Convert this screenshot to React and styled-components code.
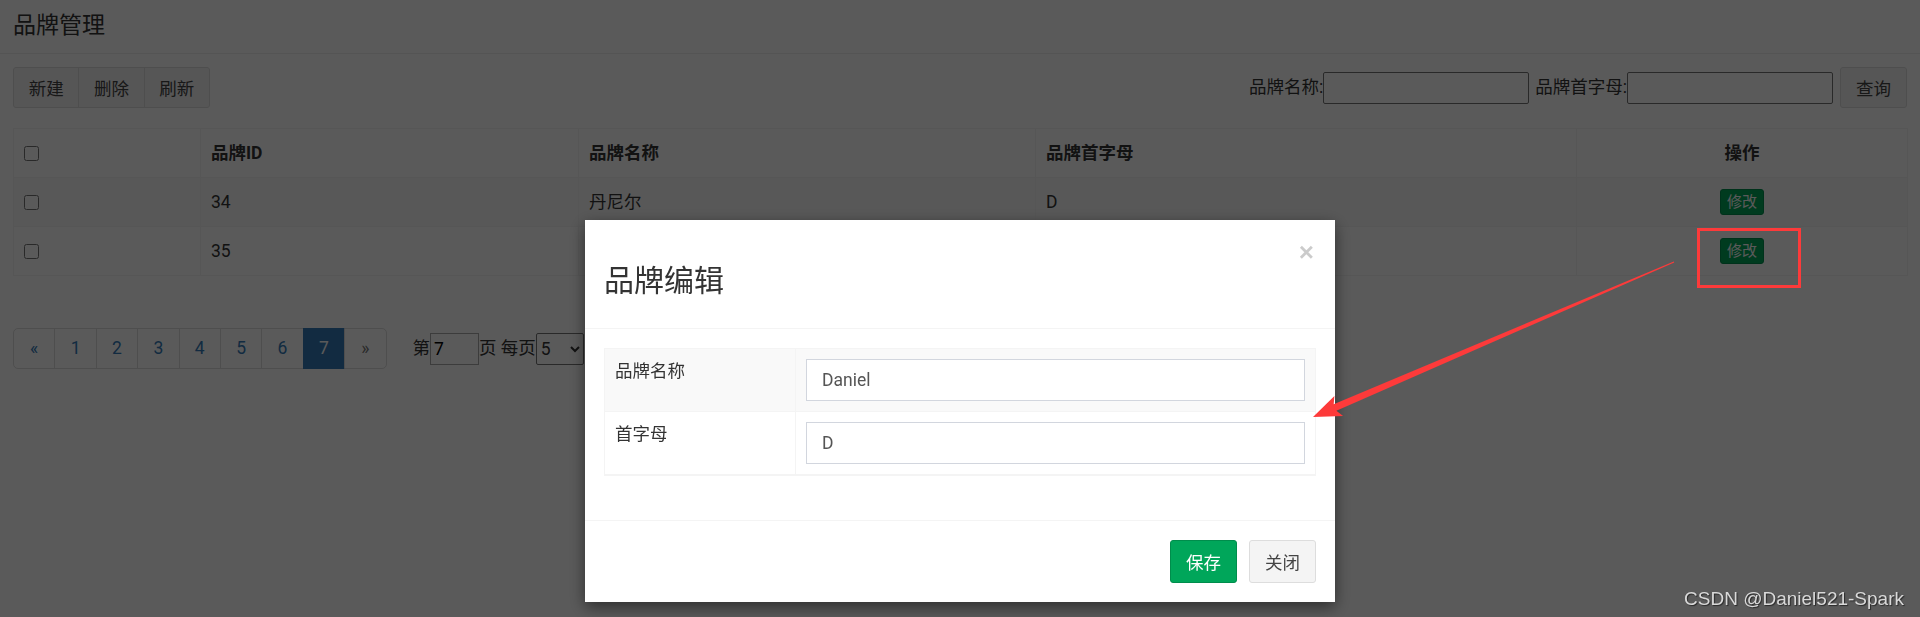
import React from 'react';
import styled, { createGlobalStyle, css } from 'styled-components';

const GlobalStyle = createGlobalStyle`
  html, body {
    margin: 0;
    padding: 0;
    background: #fff;
  }
  body {
    width: 1920px;
    height: 617px;
    overflow: hidden;
    font-family: Roboto, "Noto Sans CJK SC", sans-serif;
    font-size: 17.5px;
    line-height: 1.42857;
    color: #333;
  }
  * {
    box-sizing: border-box;
  }
`;

const Page = styled.div`
    padding: 0 13px;
`;

const PageHeader = styled.div`
    height: 54px;
    margin: 0 -13px;
    padding: 0 13px;
    display: flex;
    align-items: center;
    border-bottom: 1px solid #eee;
`;

const Title = styled.h3`
    margin: 0;
    font-size: 23px;
    font-weight: 400;
`;

const Toolbar = styled.div`
    margin-top: 13px;
    height: 41px;
    display: flex;
    justify-content: space-between;
    align-items: center;
`;

const BtnGroup = styled.div`
    display: flex;
`;

const btnBase = css`
    height: 41px;
    padding: 0;
    font-family: inherit;
    font-size: 17.5px;
    background: #f4f4f4;
    border: 1px solid #ddd;
    color: #444;
    cursor: pointer;
`;

const GroupBtn = styled.button`
    ${btnBase};
    width: 66.3px;
    border-radius: 0;
    & + & {
        margin-left: -1px;
    }
    &:first-child {
        border-radius: 3px 0 0 3px;
    }
    &:last-child {
        border-radius: 0 3px 3px 0;
    }
`;

const SearchForm = styled.form`
    display: flex;
    align-items: center;
`;

const SearchLabel = styled.label`
    margin-left: ${p => p.$gap || 0}px;
    white-space: nowrap;
`;

const SearchInput = styled.input`
    width: 206px;
    height: 32px;
    border: 1px solid #767676;
    border-radius: 2px;
    padding: 1px 4px;
    font: inherit;
`;

const QueryBtn = styled.button`
    ${btnBase};
    width: 67px;
    margin-left: 7px;
    border-radius: 3px;
`;

const DataTable = styled.table`
    width: 100%;
    margin-top: 20px;
    border-collapse: collapse;
    table-layout: fixed;
    border: 1px solid #f4f4f4;

    th, td {
        height: 49px;
        padding: 0 10px;
        border: 1px solid #f4f4f4;
        text-align: left;
        vertical-align: middle;
    }
    th {
        font-weight: 700;
    }
    tbody tr:nth-child(odd) {
        background: #f9f9f9;
    }
`;

const Col = styled.col`
    width: ${p => p.$w}px;
`;

const CenterCell = styled.td`
    && {
        text-align: center;
    }
`;

const CenterHead = styled.th`
    && {
        text-align: center;
    }
`;

const Check = styled.input.attrs({ type: 'checkbox' })`
    width: 15px;
    height: 15px;
    margin: 0;
    vertical-align: middle;
`;

const EditBtn = styled.button`
    font-family: inherit;
    font-size: 15px;
    line-height: 1.5;
    padding: 1px 6px;
    background: #00a65a;
    border: 1px solid #008d4c;
    border-radius: 3px;
    color: #fff;
`;

const PagerRow = styled.div`
    margin-top: 52px;
    display: flex;
    align-items: center;
`;

const Pagination = styled.ul`
    display: flex;
    margin: 0;
    padding: 0;
    list-style: none;
`;

const PageItem = styled.li`
    width: 42.4px;
    height: 41px;
    display: flex;
    align-items: center;
    justify-content: center;
    border: 1px solid #ddd;
    background: ${p => (p.$active ? '#337ab7' : '#fff')};
    border-color: ${p => (p.$active ? '#337ab7' : '#ddd')};
    color: ${p => (p.$active ? '#fff' : p.$muted ? '#777' : '#337ab7')};
    & + & {
        margin-left: -1px;
    }
    &:first-child {
        border-radius: 5px 0 0 5px;
    }
    &:last-child {
        border-radius: 0 5px 5px 0;
    }
`;

const PageInfo = styled.div`
    margin-left: 26px;
    display: flex;
    align-items: center;
    white-space: pre;
`;

const PageInput = styled.input`
    width: 49px;
    height: 32px;
    border: 1px solid #a9a9a9;
    padding: 1px 3px;
    font: inherit;
`;

const SizeSelect = styled.select`
    width: 48px;
    height: 32px;
    border: 1px solid #767676;
    border-radius: 2px;
    font: inherit;
    background: #fff;
    color: #333;
`;

const Backdrop = styled.div`
    position: fixed;
    inset: 0;
    background: rgba(0, 0, 0, 0.647);
`;

const ModalLayer = styled.div`
    position: fixed;
    inset: 0;
    display: flex;
    justify-content: center;
    align-items: flex-start;
    padding-top: 220px;
`;

const ModalBox = styled.div`
    width: 750px;
    background: #fff;
    box-shadow: 0 5px 15px rgba(0, 0, 0, 0.5);
`;

const ModalHeader = styled.div`
    display: flex;
    align-items: flex-start;
    padding: 19px;
    border-bottom: 1px solid #f4f4f4;
`;

const ModalTitle = styled.h3`
    flex: 1;
    margin: 25px 0 12px;
    font-size: 30px;
    line-height: 33px;
    font-weight: 400;
    color: #333;
`;

const CloseBtn = styled.button`
    padding: 0;
    margin-right: 2px;
    border: 0;
    background: none;
    font-family: "Liberation Sans", Arial, sans-serif;
    font-size: 26px;
    font-weight: 700;
    line-height: 1;
    color: #000;
    opacity: 0.2;
    text-shadow: 0 1px 0 #fff;
`;

const ModalBody = styled.div`
    padding: 19px;
`;

const FormTable = styled.table`
    width: 100%;
    margin-bottom: 25px;
    border-collapse: collapse;
    table-layout: fixed;
    border: 1px solid #f4f4f4;
    border-bottom-width: 2px;

    td {
        padding: 10px;
        border: 1px solid #f4f4f4;
        vertical-align: top;
        line-height: 25px;
    }
    tr:nth-child(odd) {
        background: #f9f9f9;
    }
`;

const FieldInput = styled.input`
    display: block;
    width: 100%;
    height: 42px;
    padding: 0 15px;
    border: 1px solid #d2d6de;
    border-radius: 0;
    font: inherit;
    color: #555;
    background: #fff;
`;

const ModalFooter = styled.div`
    display: flex;
    justify-content: flex-end;
    gap: 12px;
    padding: 19px;
    border-top: 1px solid #f4f4f4;
`;

const FooterBtn = styled.button`
    width: 67px;
    height: 43px;
    padding: 0;
    font-family: inherit;
    font-size: 17.5px;
    border-radius: 3px;
    border: 1px solid ${p => (p.$primary ? '#008d4c' : '#ddd')};
    background: ${p => (p.$primary ? '#00a65a' : '#f4f4f4')};
    color: ${p => (p.$primary ? '#fff' : '#444')};
`;

const Annotation = styled.svg`
    position: fixed;
    left: 0;
    top: 0;
    pointer-events: none;
`;

const Watermark = styled.div`
    position: fixed;
    right: 16px;
    bottom: 9px;
    font-family: "Liberation Sans", Arial, sans-serif;
    font-size: 19px;
    line-height: 1;
    color: #d9d9d9;
    text-shadow: 1px 1px 1px rgba(0, 0, 0, 0.55);
`;

const brands = [
    { id: 34, name: '丹尼尔', letter: 'D' },
    { id: 35, name: '', letter: '' },
];

const pages = ['«', '1', '2', '3', '4', '5', '6', '7', '»'];

const App = () => {
    return (
        <>
            <GlobalStyle />
            <Page>
                <PageHeader>
                    <Title>品牌管理</Title>
                </PageHeader>

                <Toolbar>
                    <BtnGroup>
                        <GroupBtn>新建</GroupBtn>
                        <GroupBtn>删除</GroupBtn>
                        <GroupBtn>刷新</GroupBtn>
                    </BtnGroup>
                    <SearchForm onSubmit={e => e.preventDefault()}>
                        <SearchLabel>品牌名称:</SearchLabel>
                        <SearchInput />
                        <SearchLabel $gap={6}>品牌首字母:</SearchLabel>
                        <SearchInput />
                        <QueryBtn type="button">查询</QueryBtn>
                    </SearchForm>
                </Toolbar>

                <DataTable>
                    <colgroup>
                        <Col $w={187} />
                        <Col $w={378} />
                        <Col $w={457} />
                        <Col $w={541} />
                        <Col $w={331} />
                    </colgroup>
                    <thead>
                        <tr>
                            <th><Check /></th>
                            <th>品牌ID</th>
                            <th>品牌名称</th>
                            <th>品牌首字母</th>
                            <CenterHead>操作</CenterHead>
                        </tr>
                    </thead>
                    <tbody>
                        {brands.map(b => (
                            <tr key={b.id}>
                                <td><Check /></td>
                                <td>{b.id}</td>
                                <td>{b.name}</td>
                                <td>{b.letter}</td>
                                <CenterCell><EditBtn>修改</EditBtn></CenterCell>
                            </tr>
                        ))}
                    </tbody>
                </DataTable>

                <PagerRow>
                    <Pagination>
                        {pages.map(p => (
                            <PageItem key={p} $active={p === '7'} $muted={p === '»'}>{p}</PageItem>
                        ))}
                    </Pagination>
                    <PageInfo>
                        第<PageInput defaultValue="7" />页 每页<SizeSelect defaultValue="5">
                            <option value="5">5</option>
                            <option value="10">10</option>
                        </SizeSelect>
                    </PageInfo>
                </PagerRow>
            </Page>

            <Backdrop />

            <ModalLayer>
                <ModalBox>
                    <ModalHeader>
                        <ModalTitle>品牌编辑</ModalTitle>
                        <CloseBtn>×</CloseBtn>
                    </ModalHeader>
                    <ModalBody>
                        <FormTable>
                            <colgroup>
                                <Col $w={191} />
                                <col />
                            </colgroup>
                            <tbody>
                                <tr>
                                    <td>品牌名称</td>
                                    <td><FieldInput defaultValue="Daniel" /></td>
                                </tr>
                                <tr>
                                    <td>首字母</td>
                                    <td><FieldInput defaultValue="D" /></td>
                                </tr>
                            </tbody>
                        </FormTable>
                    </ModalBody>
                    <ModalFooter>
                        <FooterBtn $primary>保存</FooterBtn>
                        <FooterBtn>关闭</FooterBtn>
                    </ModalFooter>
                </ModalBox>
            </ModalLayer>

            {/* red markup drawn over the screenshot */}
            <Annotation width="1920" height="617" viewBox="0 0 1920 617">
                <rect x="1698.5" y="229.5" width="101" height="57" fill="none" stroke="#fd3a3a" strokeWidth="3" />
                <polygon
                    fill="#fd3a3a"
                    points="1673.8,261.4 1333.7,404.3 1334.4,395.9 1313,417 1343.1,416.1 1336.4,410.8 1674.2,262.6"
                />
            </Annotation>

            <Watermark>CSDN @Daniel521-Spark</Watermark>
        </>
    );
};

export default App;
